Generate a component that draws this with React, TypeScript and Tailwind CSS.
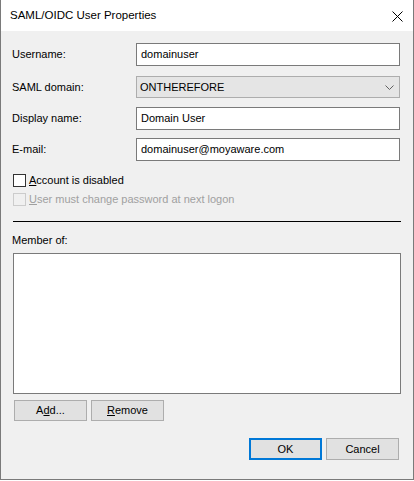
import React from "react";

const font = { fontFamily: '"Liberation Sans", Arial, sans-serif' };

function Input({ value }: { value: string }) {
  return (
    <div className="w-[264px] h-[23px] border border-[#7a7a7a] bg-white flex items-center pl-[4px] text-[11px] text-black">
      {value}
    </div>
  );
}

function Row({ label, children, className }: { label: string; children: React.ReactNode; className: string }) {
  return (
    <div className={"flex items-center " + className}>
      <div className="w-[124px] -ml-[1px] text-[11px] text-black">{label}</div>
      {children}
    </div>
  );
}

export default function App() {
  return (
    <div className="w-[414px] h-[481px] bg-white" style={font}>
      <div className="h-[480px] flex flex-col border-l border-r border-b border-[#7a7a7a]">
        <div className="h-[31px] bg-white flex items-center justify-between pl-[9px] pr-[10px]">
          <span className="text-[11.5px] text-black" style={{ fontFamily: '"Liberation Sans", Arial, sans-serif' }}>
            SAML/OIDC User Properties
          </span>
          <svg width="11" height="11" viewBox="0 0 11 11" className="mt-[1px]">
            <path d="M0.5 0.5 L10.5 10.5 M10.5 0.5 L0.5 10.5" stroke="#000" strokeWidth="1" />
          </svg>
        </div>
        <div className="flex-1 bg-[#f0f0f0] pl-[12px] pr-[12px] flex flex-col">
          <Row label="Username:" className="mt-[12px] h-[23px]">
            <Input value="domainuser" />
          </Row>
          <Row label="SAML domain:" className="mt-[10px] h-[22px]">
            <div className="w-[264px] h-[22px] border border-[#adadad] bg-[#e5e5e5] flex items-center justify-between pl-[3px] pr-[5px] text-[11px] text-black">
              <span>ONTHEREFORE</span>
              <svg width="9" height="5" viewBox="0 0 9 5">
                <path d="M0.5 0.5 L4.5 4.5 L8.5 0.5" stroke="#606060" strokeWidth="1" fill="none" />
              </svg>
            </div>
          </Row>
          <Row label="Display name:" className="mt-[9px] h-[23px]">
            <Input value="Domain User" />
          </Row>
          <Row label="E-mail:" className="mt-[8px] h-[23px]">
            <Input value="domainuser@moyaware.com" />
          </Row>

          <div className="mt-[13px] h-[13px] flex items-center">
            <div className="w-[13px] h-[13px] border border-[#333333] bg-white" />
            <span className="ml-[3px] text-[11px] text-black">
              <span className="underline">A</span>ccount is disabled
            </span>
          </div>
          <div className="mt-[6px] h-[13px] flex items-center">
            <div className="w-[13px] h-[13px] border border-[#cccccc] bg-[#f0f0f0]" />
            <span className="ml-[3px] text-[11px] text-[#a0a0a0]">
              <span className="underline">U</span>ser must change password at next logon
            </span>
          </div>

          <div className="mt-[15px] h-[1px] bg-black w-[388px]" />

          <div className="mt-[12px] h-[13px] flex items-center text-[11px] text-black -ml-[1px]">Member of:</div>

          <div className="mt-[6px] w-[388px] h-[141px] border border-[#7a7a7a] bg-white" />

          <div className="mt-[6px] flex gap-[4px] pl-[1px]">
            <button className="w-[73px] h-[21px] border border-[#adadad] bg-[#e1e1e1] text-[11px] text-black flex items-center justify-center">
              A<span className="underline">d</span>d...
            </button>
            <button className="w-[73px] h-[21px] border border-[#adadad] bg-[#e1e1e1] text-[11px] text-black flex items-center justify-center">
              <span className="underline">R</span>emove
            </button>
          </div>

          <div className="mt-[17px] flex justify-end gap-[4px] pr-[2px]">
            <button className="w-[73px] h-[22px] border-2 border-[#0078d7] bg-[#e1e1e1] text-[11px] text-black flex items-center justify-center">
              OK
            </button>
            <button className="w-[73px] h-[22px] border border-[#adadad] bg-[#e1e1e1] text-[11px] text-black flex items-center justify-center">
              Cancel
            </button>
          </div>
        </div>
      </div>
    </div>
  );
}
